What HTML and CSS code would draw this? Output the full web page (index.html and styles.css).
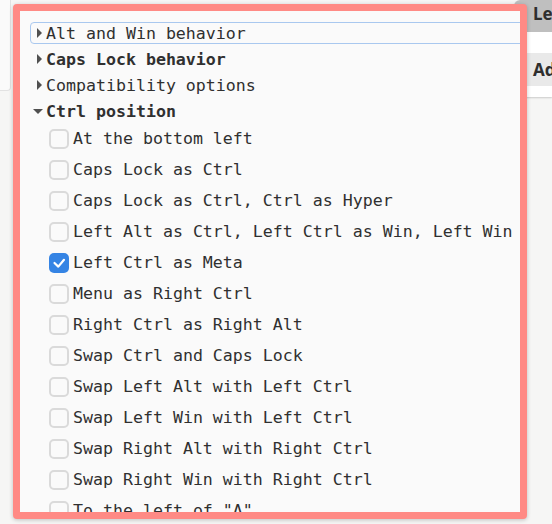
FILE: index.html
```html
<!DOCTYPE html>
<html>
<head>
<meta charset="utf-8">
<link rel="stylesheet" href="styles.css">
</head>
<body>
<div class="page">
  <div class="side-left"></div>
  <div class="side-right">
    <div class="card">
      <div class="tab">Le</div>
      <div class="card-row">Ad</div>
    </div>
  </div>
</div>

<div class="popover">
  <div class="tree">
    <div class="group focused"><span class="exp"><span class="tri-right"></span></span><span class="label">Alt and Win behavior</span></div>
    <div class="group bold"><span class="exp"><span class="tri-right"></span></span><span class="label">Caps Lock behavior</span></div>
    <div class="group"><span class="exp"><span class="tri-right"></span></span><span class="label">Compatibility options</span></div>
    <div class="group bold"><span class="exp"><span class="tri-down"></span></span><span class="label">Ctrl position</span></div>
    <div class="options">
      <div class="opt"><span class="cb"></span><span class="label">At the bottom left</span></div>
      <div class="opt"><span class="cb"></span><span class="label">Caps Lock as Ctrl</span></div>
      <div class="opt"><span class="cb"></span><span class="label">Caps Lock as Ctrl, Ctrl as Hyper</span></div>
      <div class="opt"><span class="cb"></span><span class="label">Left Alt as Ctrl, Left Ctrl as Win, Left Win as Alt</span></div>
      <div class="opt"><span class="cb checked"><svg viewBox="0 0 20 20" width="20" height="20"><path d="M5.5 10 L9.3 13.6 L15 6.8" fill="none" stroke="#fff" stroke-width="2.2" stroke-linecap="round" stroke-linejoin="round"/></svg></span><span class="label">Left Ctrl as Meta</span></div>
      <div class="opt"><span class="cb"></span><span class="label">Menu as Right Ctrl</span></div>
      <div class="opt"><span class="cb"></span><span class="label">Right Ctrl as Right Alt</span></div>
      <div class="opt"><span class="cb"></span><span class="label">Swap Ctrl and Caps Lock</span></div>
      <div class="opt"><span class="cb"></span><span class="label">Swap Left Alt with Left Ctrl</span></div>
      <div class="opt"><span class="cb"></span><span class="label">Swap Left Win with Left Ctrl</span></div>
      <div class="opt"><span class="cb"></span><span class="label">Swap Right Alt with Right Ctrl</span></div>
      <div class="opt"><span class="cb"></span><span class="label">Swap Right Win with Right Ctrl</span></div>
      <div class="opt"><span class="cb"></span><span class="label">To the left of "A"</span></div>
    </div>
  </div>
</div>
</body>
</html>
```

FILE: styles.css
```css
html, body {
  margin: 0;
  padding: 0;
  background: #f6f6f5;
  width: 552px;
  height: 524px;
  overflow: hidden;
}

.page {
  display: flex;
  justify-content: space-between;
  align-items: flex-start;
  height: 524px;
}

.side-left {
  width: 10px;
  height: 90px;
  background: #fafafa;
  border-right: 1px solid #e2e2e2;
  border-bottom: 1px solid #e2e2e2;
  border-bottom-right-radius: 4px;
}

.side-right {
  width: 38px;
}

.card {
  background: #ffffff;
  box-shadow: 0 1px 2px rgba(0, 0, 0, 0.18);
  border-top-left-radius: 6px;
  padding-bottom: 11px;
  font-family: "Noto Sans", sans-serif;
  font-weight: 700;
  font-size: 17px;
  color: #2e2e2e;
}

.tab {
  height: 32px;
  line-height: 28px;
  padding-left: 19px;
  background: #bfbfbf;
  border-top-left-radius: 6px;
  white-space: nowrap;
  overflow: hidden;
}

.card-row {
  margin-top: 21px;
  height: 33px;
  line-height: 33px;
  padding-left: 19px;
  background: #e9e9e9;
  white-space: nowrap;
  overflow: hidden;
}

.popover {
  position: absolute;
  left: 13px;
  top: 4px;
  width: 514px;
  height: 515px;
  box-sizing: border-box;
  border: 7px solid #ff8a85;
  border-radius: 4px;
  background: #fafafa;
  box-shadow: 0 1px 4px rgba(0, 0, 0, 0.22);
  overflow: hidden;
}

.tree {
  display: flex;
  flex-direction: column;
  width: 600px;
  padding-top: 9px;
  font-family: "DejaVu Sans Mono", "Liberation Mono", monospace;
  font-size: 16.6px;
  color: #303030;
}

.group {
  display: flex;
  align-items: center;
  height: 22px;
  margin: 2px 0 2px 10px;
  padding-left: 2px;
  border: 1px solid transparent;
  border-radius: 4px;
  box-sizing: border-box;
  white-space: nowrap;
}

.group.focused {
  border-color: #a9c8ef;
}

.group.bold {
  font-weight: 700;
}

.exp {
  width: 10px;
  height: 10px;
  display: flex;
  align-items: center;
  justify-content: center;
  margin-right: 3px;
}

.tri-right {
  width: 0;
  height: 0;
  border-top: 5px solid transparent;
  border-bottom: 5px solid transparent;
  border-left: 5px solid #505050;
  margin-left: 3px;
}

.tri-down {
  width: 0;
  height: 0;
  border-left: 5px solid transparent;
  border-right: 5px solid transparent;
  border-top: 5px solid #505050;
}

.options {
  margin-top: -1px;
}

.opt {
  display: flex;
  align-items: center;
  height: 31px;
  padding-left: 29px;
  gap: 4px;
  white-space: nowrap;
}

.cb {
  flex: none;
  width: 20px;
  height: 20px;
  box-sizing: border-box;
  border: 2px solid #dadada;
  border-radius: 5px;
  background: #fafafa;
}

.cb.checked {
  border: none;
  background: #3584e4;
  display: flex;
}
```
